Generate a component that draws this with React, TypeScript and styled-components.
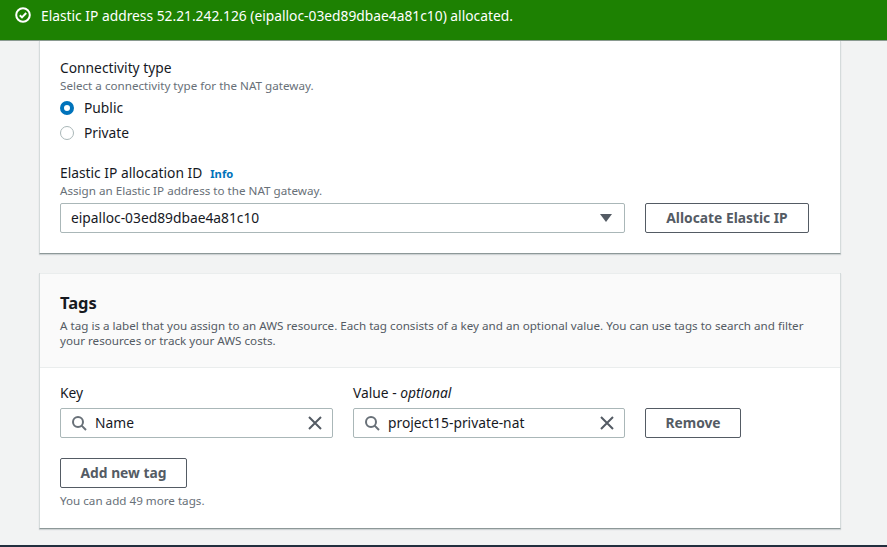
import React from "react";
import styled, { createGlobalStyle } from "styled-components";

const GlobalStyle = createGlobalStyle`
  html, body {
    margin: 0;
    padding: 0;
    height: 547px;
    overflow: hidden;
    background: #f2f3f3;
    font-family: "Noto Sans", "Open Sans", sans-serif;
    color: #16191f;
  }
`;

const Page = styled.div`
  height: 547px;
  display: flex;
  flex-direction: column;
  overflow: hidden;
`;

const Flash = styled.div`
  height: 41px;
  flex: none;
  box-sizing: border-box;
  background: #1d8102;
  border-bottom: 1px solid #8a9a90;
  color: #fff;
  display: flex;
  align-items: center;
  gap: 10px;
  padding: 0 15px 10px;
  font-size: 13.8px;
`;

const Content = styled.main`
  flex: 1;
  display: flex;
  flex-direction: column;
  gap: 19px;
  padding: 0 46px 0 39px;
`;

const Card = styled.section`
  background: #fff;
  border-right: 1px solid #d5dbdb;
  border-left: 1px solid #d5dbdb;
  border-bottom: 1px solid #8d9898;
  box-shadow: 0 1px 1px rgba(0, 33, 43, 0.15);
`;

const NetworkBody = styled.div`
  height: 212px;
  box-sizing: border-box;
  padding: 18px 20px 0;
`;

const Label = styled.div`
  font-size: 13.8px;
  line-height: 18px;
  color: #16191f;
`;

const Hint = styled.div`
  font-size: 11.65px;
  line-height: 16px;
  color: #687078;
`;

const SubHint = styled(Hint)`
  margin-top: 1px;
`;

const InfoLink = styled.span`
  margin-left: 8px;
  font-size: 11.2px;
  font-weight: 700;
  color: #0073bb;
`;

const RadioRow = styled.div`
  height: 25px;
  display: flex;
  align-items: center;
  gap: 10px;
  font-size: 13.8px;
`;

const RadioDot = styled.span<{ $on?: boolean }>`
  width: 14px;
  height: 14px;
  border-radius: 50%;
  box-sizing: border-box;
  flex: none;
  background: #fff;
  border: ${(p) => (p.$on ? "4px solid #0073bb" : "1px solid #aab7b8")};
`;

const RadioGroup = styled.div`
  margin-top: 1px;
  margin-bottom: 19px;
`;

const FieldRow = styled.div`
  display: flex;
  gap: 20px;
  margin-top: 4px;
`;

const Select = styled.div`
  width: 565px;
  height: 30px;
  box-sizing: border-box;
  border: 1px solid #aab7b8;
  border-radius: 2px;
  display: flex;
  align-items: center;
  justify-content: space-between;
  padding: 0 12px 2px 10px;
  font-size: 13.8px;
`;

const Caret = styled.span`
  width: 0;
  height: 0;
  margin-top: 2px;
  border-left: 6px solid transparent;
  border-right: 6px solid transparent;
  border-top: 8px solid #545b64;
`;

const Button = styled.div<{ $w: number }>`
  width: ${(p) => p.$w}px;
  height: 30px;
  box-sizing: border-box;
  border: 1px solid #545b64;
  border-radius: 2px;
  background: #fff;
  color: #545b64;
  font-size: 13.8px;
  font-weight: 700;
  display: flex;
  align-items: center;
  justify-content: center;
  padding-bottom: 2px;
`;

const TagsHeader = styled.header`
  height: 95px;
  box-sizing: border-box;
  background: #fafafa;
  border-top: 1px solid #eaeded;
  border-bottom: 1px solid #eaeded;
  padding: 18px 20px 0;
`;

const Title = styled.h2`
  margin: 0 0 4px;
  font-size: 16.5px;
  line-height: 22px;
  font-weight: 700;
`;

const HeaderText = styled(Hint)`
  color: #545b64;
  line-height: 15px;
`;

const TagsBody = styled.div`
  padding: 16px 20px 0;
  height: 160px;
  box-sizing: border-box;
`;

const TagGrid = styled.div`
  display: grid;
  grid-template-columns: 273px 272px auto;
  column-gap: 20px;
  align-items: end;
`;

const TagField = styled.div`
  display: flex;
  flex-direction: column;
  gap: 6px;
`;

const SearchInput = styled.div`
  height: 30px;
  box-sizing: border-box;
  border: 1px solid #aab7b8;
  border-radius: 2px;
  display: flex;
  align-items: center;
  padding: 0 9px 0 10px;
  gap: 8px;
  font-size: 13.8px;
`;

const InputValue = styled.span`
  flex: 1;
  margin-bottom: 2px;
`;

const AddRow = styled.div`
  margin-top: 20px;
`;

const Footnote = styled(Hint)`
  margin-top: 5px;
`;

const BottomBar = styled.div`
  height: 2px;
  flex: none;
  background: #232f3e;
`;

const CheckIcon = () => (
  <svg width="16" height="16" viewBox="0 0 16 16" fill="none" stroke="#fff" strokeWidth="2">
    <circle cx="8" cy="8" r="6.8" />
    <path d="M4.8 8.2l2.2 2.2 4.2-4.4" />
  </svg>
);

const SearchIcon = () => (
  <svg width="16" height="16" viewBox="0 0 16 16" fill="none" stroke="#687078" strokeWidth="2">
    <circle cx="7" cy="7" r="5" />
    <path d="M10.6 10.6L15 15" />
  </svg>
);

const ClearIcon = () => (
  <svg width="16" height="16" viewBox="0 0 16 16" fill="none" stroke="#545b64" strokeWidth="2">
    <path d="M2 2l12 12M14 2L2 14" />
  </svg>
);

const App: React.FC = () => (
  <Page>
    <GlobalStyle />
    <Flash>
      <CheckIcon />
      Elastic IP address 52.21.242.126 (eipalloc-03ed89dbae4a81c10) allocated.
    </Flash>
    <Content>
      <Card>
        <NetworkBody>
          <Label>Connectivity type</Label>
          <SubHint>Select a connectivity type for the NAT gateway.</SubHint>
          <RadioGroup>
            <RadioRow>
              <RadioDot $on />
              Public
            </RadioRow>
            <RadioRow>
              <RadioDot />
              Private
            </RadioRow>
          </RadioGroup>
          <Label>
            Elastic IP allocation ID<InfoLink>Info</InfoLink>
          </Label>
          <Hint>Assign an Elastic IP address to the NAT gateway.</Hint>
          <FieldRow>
            <Select>
              eipalloc-03ed89dbae4a81c10
              <Caret />
            </Select>
            <Button $w={164}>Allocate Elastic IP</Button>
          </FieldRow>
        </NetworkBody>
      </Card>
      <Card>
        <TagsHeader>
          <Title>Tags</Title>
          <HeaderText>
            A tag is a label that you assign to an AWS resource. Each tag consists of a key and an optional value. You can use tags to search and filter
            <br />
            your resources or track your AWS costs.
          </HeaderText>
        </TagsHeader>
        <TagsBody>
          <TagGrid>
            <TagField>
              <Label>Key</Label>
              <SearchInput>
                <SearchIcon />
                <InputValue>Name</InputValue>
                <ClearIcon />
              </SearchInput>
            </TagField>
            <TagField>
              <Label>
                Value - <em>optional</em>
              </Label>
              <SearchInput>
                <SearchIcon />
                <InputValue>project15-private-nat</InputValue>
                <ClearIcon />
              </SearchInput>
            </TagField>
            <Button $w={96}>Remove</Button>
          </TagGrid>
          <AddRow>
            <Button $w={127}>Add new tag</Button>
          </AddRow>
          <Footnote>You can add 49 more tags.</Footnote>
        </TagsBody>
      </Card>
    </Content>
    <BottomBar />
  </Page>
);

export default App;
